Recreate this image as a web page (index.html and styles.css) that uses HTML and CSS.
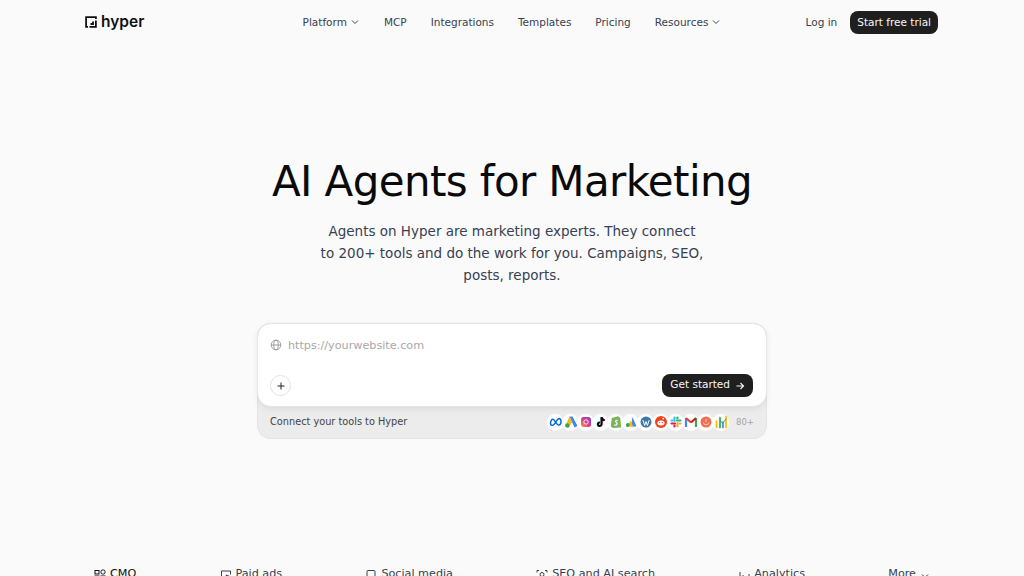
FILE: index.html
```html
<!DOCTYPE html>
<html lang="en">
<head>
<meta charset="utf-8">
<title>Hyper</title>
<link rel="stylesheet" href="styles.css">
</head>
<body>
<header class="nav">
  <a class="logo">
    <svg class="logo-mark" viewBox="0 0 12 12" width="12" height="12"><path d="M3 10.900H1.100V1.100h9.800v1.900M10.900 4.500v6.400H4.500M8 5.500V8H5.500" fill="none" stroke="#111" stroke-width="1.800"/></svg>
    <span>hyper</span>
  </a>
  <nav class="links">
    <a>Platform <svg class="chev" viewBox="0 0 10 10"><path d="M2 3.500 5 6.500 8 3.500"/></svg></a>
    <a>MCP</a>
    <a>Integrations</a>
    <a>Templates</a>
    <a>Pricing</a>
    <a>Resources <svg class="chev" viewBox="0 0 10 10"><path d="M2 3.500 5 6.500 8 3.500"/></svg></a>
  </nav>
  <div class="actions">
    <a class="login">Log in</a>
    <a class="btn trial">Start free trial</a>
  </div>
</header>
<main class="hero">
  <h1>AI Agents for Marketing</h1>
  <p class="sub">Agents on Hyper are marketing experts. They connect<br>to 200+ tools and do the work for you. Campaigns, SEO,<br>posts, reports.</p>
  <div class="composer">
    <div class="card">
      <div class="url">
        <svg class="globe" viewBox="0 0 12 12"><circle cx="6" cy="6" r="4.800"/><ellipse cx="6" cy="6" rx="2.200" ry="4.800"/><path d="M1.200 6h9.600"/></svg>
        <span>https://yourwebsite.com</span>
      </div>
      <div class="card-foot">
        <span class="plus"><svg viewBox="0 0 10 10"><path d="M5 1.500v7M1.500 5h7"/></svg></span>
        <a class="btn start">Get started <svg viewBox="0 0 10 10"><path d="M1.500 5h7M5.500 2 8.500 5 5.500 8"/></svg></a>
      </div>
    </div>
    <div class="connect">
      <span class="connect-label">Connect your tools to Hyper</span>
      <div class="tools">
        <i class="tool"><svg viewBox="0 0 14 14"><path d="M1.500 8.500C1.500 5 3.500 3.500 4.800 4.700S8 10.500 10 10c2.500-.5 2.800-6 .2-6.500C8.500 3.300 6.500 8 5 9.500 3 11 1.500 10 1.500 8.500z" fill="none" stroke="#0668e1" stroke-width="1.500"/></svg></i>
        <i class="tool"><svg viewBox="0 0 14 14"><path d="M5.500 1.500h3l5 9.500-3 1.500z" fill="#4285f4"/><path d="M5.500 1.500 8 7l-3 5.500L1.500 10.500z" fill="#fbbc04"/><circle cx="3.300" cy="10.500" r="2.200" fill="#34a853"/></svg></i>
        <i class="tool"><svg viewBox="0 0 14 14"><defs><linearGradient id="ig" x1="0" y1="1" x2="1" y2="0"><stop offset="0" stop-color="#f9a13b"/><stop offset=".5" stop-color="#d9368a"/><stop offset="1" stop-color="#7a4fd0"/></linearGradient></defs><rect x="2" y="2" width="10" height="10" rx="2.500" fill="url(#ig)"/><circle cx="7" cy="7" r="2.200" fill="none" stroke="#fff" stroke-width=".9"/></svg></i>
        <i class="tool"><svg viewBox="0 0 14 14"><path d="M7.500 2v7.200a1.800 1.800 0 1 1-1.800-1.800M7.500 2.200c.2 1.700 1.400 2.800 3 3" fill="none" stroke="#25f4ee" stroke-width="1.800" transform="translate(-.4 .3)"/><path d="M7.500 2v7.200a1.800 1.800 0 1 1-1.800-1.800M7.500 2.200c.2 1.700 1.400 2.800 3 3" fill="none" stroke="#fe2c55" stroke-width="1.800" transform="translate(.4 -.1)"/><path d="M7.500 2v7.200a1.800 1.800 0 1 1-1.800-1.800M7.500 2.200c.2 1.700 1.400 2.800 3 3" fill="none" stroke="#000" stroke-width="1.800"/></svg></i>
        <i class="tool"><svg viewBox="0 0 14 14"><path d="M2.800 3 9 1.200l2.200 1.500L12.200 12.500 3.800 13 1.800 11.500z" fill="#7ab55c"/><path d="M8.700 5.500C7 4.800 6 6 7 7s1.700 1.800.5 2.800c-.7.500-1.500.3-2.200 0" fill="none" stroke="#fff" stroke-width="1.200"/></svg></i>
        <i class="tool"><svg viewBox="0 0 14 14"><path d="M8.500 2 12.500 11.500H7z" fill="#4285f4"/><path d="M7 5.500 9.200 11.500H3z" fill="#fbbc04"/><circle cx="3.800" cy="10" r="2" fill="#34a853"/></svg></i>
        <i class="tool"><svg viewBox="0 0 14 14"><circle cx="7" cy="7" r="5.500" fill="#3a78a8"/><path d="M3.800 5 5.700 10.500 7 6.500 8.400 10.500 10.200 5" fill="none" stroke="#fff" stroke-width="1"/></svg></i>
        <i class="tool"><svg viewBox="0 0 14 14"><circle cx="7" cy="7" r="6" fill="#f0411d"/><ellipse cx="7" cy="8" rx="3.600" ry="2.500" fill="#fff"/><circle cx="5.700" cy="7.600" r=".7" fill="#f0411d"/><circle cx="8.300" cy="7.600" r=".7" fill="#f0411d"/><circle cx="9.200" cy="3.600" r=".9" fill="#fff"/></svg></i>
        <i class="tool"><svg viewBox="0 0 14 14" fill="none" stroke-width="2.200" stroke-linecap="round"><path d="M5.500 2.500v3.500" stroke="#36c5f0"/><path d="M2.500 8.500h3.500" stroke="#e01e5a"/><path d="M8.500 11.500V8" stroke="#ecb22e"/><path d="M11.500 5.500H8" stroke="#2eb67d"/><path d="M2.500 5.500h1" stroke="#36c5f0"/><path d="M5.500 11.500v-1" stroke="#e01e5a"/><path d="M11.500 8.500h-1" stroke="#ecb22e"/><path d="M8.500 2.500v1" stroke="#2eb67d"/></svg></i>
        <i class="tool"><svg viewBox="0 0 14 14" fill="none" stroke-width="2.200"><path d="M2 12V3" stroke="#4285f4"/><path d="M12 12V3" stroke="#34a853"/><path d="M2 3 7 7.500" stroke="#ea4335"/><path d="M12 3 7 7.500" stroke="#c5221f"/></svg></i>
        <i class="tool"><svg viewBox="0 0 14 14"><circle cx="7" cy="7" r="5.500" fill="#ee6f4f"/><path d="M4.600 7.500a2.400 2.400 0 0 0 4.800 0M7 4v3" fill="none" stroke="#fbd3c7" stroke-width="1"/></svg></i>
        <i class="tool"><svg viewBox="0 0 14 14" fill="none" stroke-width="1.700" stroke-linecap="round"><path d="M2.500 12.500V6" stroke="#fbbc04"/><path d="M6 12.500V2.500" stroke="#34a853"/><path d="M9 12.500V7" stroke="#4285f4"/><path d="M12 12.500V1.500" stroke="#fbbc04"/><path d="M6 6l3 2 3-4" stroke="#34a853" stroke-width="1"/></svg></i>
        <span class="count">80+</span>
      </div>
    </div>
  </div>
</main>
<section class="tabs">
  <a class="tab active"><svg viewBox="0 0 12 12"><rect x="1" y="1.500" width="4" height="3.500"/><rect x="7" y="1" width="4" height="4" rx="1.500"/><rect x="1" y="7" width="4" height="4"/><rect x="7" y="7" width="4" height="4"/></svg>CMO</a>
  <a class="tab"><svg viewBox="0 0 12 12"><path d="M5 10.500H1.500v-8.500h9V5.500M6 6l4.500 1.800-2 .7-.7 2z"/></svg>Paid ads</a>
  <a class="tab"><svg viewBox="0 0 12 12"><rect x="2" y="1.500" width="8" height="9.500" rx="1"/></svg>Social media</a>
  <a class="tab"><svg viewBox="0 0 12 12"><path d="M1 3.500V1.500h2M9 1.500h2v2M1 8.500v2h2M9 10.500h2v-2"/><circle cx="6" cy="5.500" r="2"/></svg>SEO and AI search</a>
  <a class="tab"><svg viewBox="0 0 12 12"><path d="M2 3v8M5 6v5M8 8v3M11 5v6"/></svg>Analytics</a>
  <a class="tab more">More <svg class="chev" viewBox="0 0 10 10"><path d="M2 3.500 5 6.500 8 3.500"/></svg></a>
</section>
</body>
</html>
```
FILE: styles.css
```css
* { box-sizing: border-box; }
html, body { margin: 0; height: 576px; overflow: hidden; }
body {
  background: #fafafa;
  color: #374151;
  font-family: "DejaVu Sans", sans-serif;
  font-size: 10.5px;
  display: flex;
  flex-direction: column;
}
svg { display: block; }
.nav {
  height: 45px;
  padding: 0 85px 2px 85px;
  display: grid;
  grid-template-columns: 1fr auto 1fr;
  align-items: center;
}
.logo {
  display: flex;
  align-items: center;
  gap: 4px;
  font-family: Inter, sans-serif;
  font-size: 15.500px;
  font-weight: 600;
  color: #111;
}
.links {
  display: flex;
  gap: 24px;
  align-items: center;
}
.links a { display: flex; align-items: center; gap: 3px; }
.chev { width: 10px; height: 10px; fill: none; stroke: currentColor; stroke-width: 1; }
.actions { display: flex; align-items: center; justify-content: flex-end; gap: 13px; padding-right: 1px; }
.btn {
  display: flex;
  align-items: center;
  background: #1f1f1f;
  color: #f7f7f7;
  border-radius: 8px;
}
.trial { height: 23px; padding: 0 7px 1px; margin-top: 2px; }
.hero { display: flex; flex-direction: column; align-items: center; }
h1 {
  margin: 107px 0 0;
  font-size: 42px;
  letter-spacing: -0.63px;
  line-height: 60px;
  font-weight: 400;
  color: #0a0a0a;
}
.sub {
  margin: 8px 0 0;
  font-size: 13.500px;
  line-height: 22px;
  text-align: center;
  color: #374151;
}
.composer {
  margin-top: 37px;
  width: 510px;
  border-radius: 14px;
  background: #ececec;
  border: 1px solid #e3e3e3;
  border-top: 0;
}
.card {
  margin: 0 -1px;
  height: 84px;
  background: #fff;
  border: 1px solid #e5e5e5;
  border-radius: 14px;
  box-shadow: 0 2px 6px rgba(0,0,0,.07);
  padding: 11px 13px 9px 12px;
  display: flex;
  flex-direction: column;
  justify-content: space-between;
}
.url { display: flex; align-items: center; gap: 6px; color: #a8a8a8; font-size: 11.200px; height: 20px; }
.globe { width: 12px; height: 12px; fill: none; stroke: #8a8a8a; stroke-width: .8; }
.card-foot { display: flex; align-items: center; justify-content: space-between; }
.plus {
  width: 21px; height: 21px;
  border: 1px solid #e2e2e2;
  border-radius: 50%;
  display: flex; align-items: center; justify-content: center;
}
.plus svg { width: 10px; height: 10px; fill: none; stroke: #222; stroke-width: 1; }
.start { height: 23px; padding: 0 8px 3px; gap: 5px; }
.start svg { width: 10px; height: 10px; fill: none; stroke: #f7f7f7; stroke-width: 1.100; margin-top: 4px; }
.connect {
  height: 31px;
  padding: 0 12px 1px;
  display: flex;
  align-items: center;
  justify-content: space-between;
  font-size: 9.750px;
  color: #444;
}
.connect-label { margin-bottom: 2px; }
.tools { display: flex; align-items: center; }
.tool {
  width: 17px; height: 17px;
  margin-right: -2px;
  border-radius: 50%;
  background: #fff;
  display: flex; align-items: center; justify-content: center;
}
.tool svg { width: 14px; height: 14px; }
.count { margin-left: 9px; font-size: 8.500px; color: #a3a3a3; }
.tabs {
  margin-top: auto;
  padding: 0 94px 0;
  height: 9px;
  flex: none;
  display: flex;
  justify-content: space-between;
  font-size: 11.200px;
}
.tab { display: flex; align-items: flex-start; gap: 4px; height: 30px; line-height: 14px; }
.tab svg { width: 12px; height: 12px; fill: none; stroke: currentColor; stroke-width: 1; margin-top: 2px; }
.tab.active { color: #111; }
.tab .chev { width: 10px; height: 10px; margin-top: 4px; }
```
